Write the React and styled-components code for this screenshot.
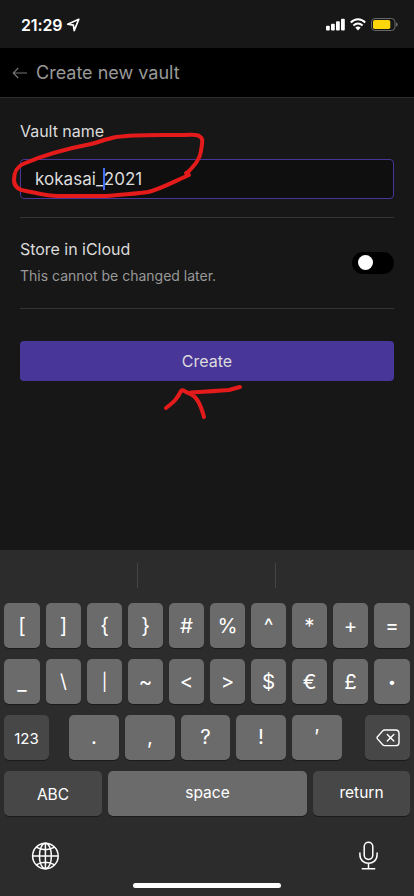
import React from "react";
import styled, { createGlobalStyle } from "styled-components";

const Global = createGlobalStyle`
  * { box-sizing: border-box; }
  body { margin: 0; background: #171717; font-family: Inter, "Liberation Sans", sans-serif; }
`;

const Phone = styled.main`
  position: relative;
  display: flex;
  flex-direction: column;
  width: 414px;
  height: 896px;
  overflow: hidden;
  background: #171717;
  color: #dcdcdc;
`;

const StatusBar = styled.header`
  display: flex;
  align-items: center;
  justify-content: space-between;
  height: 48px;
  padding: 1px 16px 0 21px;
  color: #fff;
`;

const StatusGroup = styled.div`
  display: flex;
  align-items: center;
  gap: ${(p) => p.$gap}px;
`;

const Clock = styled.span`
  font-size: 16px;
  font-weight: 600;
  line-height: 20px;
  letter-spacing: -0.15px;
`;

const TitleBar = styled.nav`
  display: flex;
  align-items: center;
  gap: 9px;
  height: 50px;
  padding: 0 12px;
  background: #000;
  border-bottom: 1px solid #2c2c2c;
  color: #999;
`;

const Title = styled.h1`
  margin: 0;
  font-size: 18px;
  font-weight: 400;
  line-height: 24px;
`;

const Form = styled.section`
  display: flex;
  flex-direction: column;
  height: 452px;
  padding: 21px 20px 0;
`;

const Label = styled.div`
  font-size: 16px;
  line-height: 24px;
  letter-spacing: -0.03px;
`;

const Field = styled.div`
  display: flex;
  align-items: center;
  height: 40px;
  margin: 16px 0 18px;
  padding: 0 14px;
  border: 1px solid #483699;
  border-radius: 4px;
  background: #0f0f0f;
  font-size: 17px;
  letter-spacing: 0.04px;
`;

const Caret = styled.i`
  width: 2px;
  height: 22px;
  margin: 0 -1px;
  background: #426cf5;
`;

const Setting = styled.div`
  display: flex;
  align-items: center;
  justify-content: space-between;
  height: 92px;
  border-top: 1px solid #333;
  border-bottom: 1px solid #333;
`;

const SettingText = styled.div`
  padding-bottom: 2px;
`;

const Hint = styled.div`
  margin-top: 4px;
  font-size: 14px;
  line-height: 22px;
  color: #999;
`;

const Switch = styled.div`
  width: 42px;
  height: 22px;
  padding: 3px 6px;
  border-radius: 11px;
  background: #000;
`;

const Knob = styled.div`
  width: 15px;
  height: 15px;
  border-radius: 50%;
  background: #fff;
`;

const CreateButton = styled.button`
  height: 40px;
  margin: 32px 0 0;
  padding: 0;
  border: 0;
  border-radius: 4px;
  background: #483699;
  color: #dcdcdc;
  font: 400 16px/40px Inter, sans-serif;
`;

const Keyboard = styled.section`
  display: flex;
  flex-direction: column;
  height: 346px;
  background: #2c2c2c;
  color: #fff;
`;

const Suggestions = styled.div`
  display: grid;
  grid-template-columns: 138px 138px 1fr;
  height: 53px;
  padding: 13px 0 15px;
`;

const Suggestion = styled.div`
  border-right: ${(p) => (p.$last ? "0" : "1px solid #454545")};
`;

const Keys = styled.div`
  display: flex;
  flex-direction: column;
  gap: 11px;
  padding: 0 4px;
`;

const KeyRow = styled.div`
  display: grid;
  grid-template-columns: ${(p) => p.$columns};
  gap: 6px;
`;

const PunctuationRow = styled.div`
  display: flex;
  justify-content: space-between;
`;

const KeyGroup = styled.div`
  display: grid;
  grid-template-columns: 50px 50px 49px 50px 50px;
  gap: 6px;
  margin-right: 3px;
`;

const Key = styled.div`
  display: flex;
  align-items: center;
  justify-content: center;
  width: ${(p) => (p.$width ? p.$width + "px" : "auto")};
  height: 45px;
  padding-top: ${(p) => p.$drop || 0}px;
  padding-bottom: ${(p) => p.$lift || 0}px;
  border-radius: 5px;
  background: ${(p) => (p.$dark ? "#474747" : "#6b6b6b")};
  box-shadow: 0 1px 0 #1b1b1b;
  font-size: ${(p) => p.$size || 20.5}px;
  font-weight: 400;
  line-height: 26px;
`;

const KeyboardFooter = styled.footer`
  display: flex;
  justify-content: space-between;
  align-items: center;
  height: 42px;
  margin-top: 19px;
  padding: 0 35px 0 31px;
`;

const HomeIndicator = styled.div`
  width: 148px;
  height: 5px;
  margin: 6px auto 0;
  border-radius: 3px;
  background: #fff;
`;

const Markup = styled.svg`
  position: absolute;
  inset: 0;
  pointer-events: none;
`;

function LocationIcon() {
  return (
    <svg width="14" height="14" viewBox="0 0 14 14" fill="none" stroke="#fff" strokeWidth="1.7" strokeLinejoin="round">
      <path d="M12.8 1.3 1.7 6.2 7.4 7.1 8.2 12.6Z" />
    </svg>
  );
}

function SignalIcon() {
  return (
    <svg width="19" height="13" viewBox="0 0 19 13" fill="#fff">
      <rect x="0" y="7.7" width="3.8" height="4.8" rx="1" />
      <rect x="5" y="5.7" width="3.8" height="6.8" rx="1" />
      <rect x="10" y="3.2" width="3.8" height="9.3" rx="1" />
      <rect x="15" y="0.7" width="3.8" height="11.8" rx="1" />
    </svg>
  );
}

function WifiIcon() {
  return (
    <svg width="16" height="13" viewBox="0 0 16 13">
      <g fill="none" stroke="#fff" strokeWidth="2">
        <path d="M.8 4.5C5 .2 11 .2 15.2 4.5" />
        <path d="M3.4 7.5Q8 3.5 12.6 7.5" />
      </g>
      <path fill="#fff" d="M5.3 9.4Q8 7.4 10.7 9.4L8 12.4Z" />
    </svg>
  );
}

function BatteryIcon() {
  return (
    <svg width="27" height="13" viewBox="0 0 27 13">
      <rect x=".5" y=".5" width="23.5" height="12" rx="3.4" fill="none" stroke="#686868" />
      <path fill="#686868" d="M25 4.3Q26.8 5 26.8 6.5T25 8.7Z" />
      <rect x="2" y="2" width="17.3" height="9" rx="1.8" fill="#ffd60a" />
    </svg>
  );
}

function BackIcon() {
  return (
    <svg width="15" height="12" viewBox="0 0 15 12" fill="none" stroke="#777" strokeWidth="1.1">
      <path d="M15 6H1.2M6.2 1 1.2 6l5 5" />
    </svg>
  );
}

function DeleteIcon() {
  return (
    <svg width="24" height="18" viewBox="0 0 24 18" fill="none" stroke="#fff" strokeWidth="1.4" strokeLinecap="round" strokeLinejoin="round">
      <path d="M8.7 1h10.9q3.4 0 3.4 3.2v9.2q0 3.2-3.4 3.2H8.7q-1.2 0-2-.9L1.5 9.9q-.9-1.1 0-2.2l5.2-5.8q.8-.9 2-.9Z" />
      <path d="m11.3 5.5 6.5 6.6m0-6.6-6.5 6.6" />
    </svg>
  );
}

function GlobeIcon() {
  return (
    <svg width="28" height="28" viewBox="0 0 28 28" fill="none" stroke="#fff" strokeWidth="1.5">
      <circle cx="14.4" cy="14" r="12.8" />
      <ellipse cx="14.4" cy="14" rx="6" ry="12.8" />
      <path d="M14.4 1.2v25.6M1.6 14h25.6M5.1 5.2q9.3 5 18.6 0M5.1 22.8q9.3-5 18.6 0" />
    </svg>
  );
}

function MicrophoneIcon() {
  return (
    <svg width="21" height="30" viewBox="0 0 21 30" fill="none" stroke="#fff" strokeWidth="1.5" strokeLinecap="round">
      <rect x="6.2" y="1.2" width="8.6" height="17.2" rx="4.3" />
      <path d="M1.9 12v1.8c0 11.2 17.2 11.2 17.2 0V12M10.5 22.3v5.5M4.3 27.8h12.4" />
    </svg>
  );
}

const brackets = ["[", "]", "{", "}", "#", "%", "^", "*", "+", "="];
const symbols = ["_", "\\", "|", "~", "<", ">", "$", "€", "£", "•"];
const punctuation = [".", ",", "?", "!", "′"];
const symbolSizes = { "|": 17, "\\": 19, "•": 14 };

const tenKeys = "36px repeat(8, 35px) 36px";

export default function App() {
  return (
    <>
      <Global />
      <Phone>
        <StatusBar>
          <StatusGroup $gap={4}><Clock>21:29</Clock><LocationIcon /></StatusGroup>
          <StatusGroup $gap={5}><SignalIcon /><WifiIcon /><BatteryIcon /></StatusGroup>
        </StatusBar>
        <TitleBar><BackIcon /><Title>Create new vault</Title></TitleBar>
        <Form>
          <Label>Vault name</Label>
          <Field><span>kokasai_</span><Caret /><span>2021</span></Field>
          <Setting>
            <SettingText><Label>Store in iCloud</Label><Hint>This cannot be changed later.</Hint></SettingText>
            <Switch><Knob /></Switch>
          </Setting>
          <CreateButton>Create</CreateButton>
        </Form>
        <Keyboard>
          <Suggestions><Suggestion /><Suggestion /><Suggestion $last /></Suggestions>
          <Keys>
            <KeyRow $columns={tenKeys}>
              {brackets.map((k) => <Key key={k}>{k}</Key>)}
            </KeyRow>
            <KeyRow $columns={tenKeys}>
              {symbols.map((k) => <Key key={k} $drop={k === "_" ? 2 : 0} $size={symbolSizes[k]}>{k}</Key>)}
            </KeyRow>
            <PunctuationRow>
              <Key $dark $width={45} $size={15} $drop={2}>123</Key>
              <KeyGroup>{punctuation.map((k) => <Key key={k} $lift={1}>{k}</Key>)}</KeyGroup>
              <Key $dark $width={45}><DeleteIcon /></Key>
            </PunctuationRow>
            <KeyRow $columns="98px 1fr 97px">
              <Key $dark $size={15.5} $drop={2}>ABC</Key>
              <Key $size={15.5} $lift={2}>space</Key>
              <Key $dark $size={15.5} $lift={2}>return</Key>
            </KeyRow>
          </Keys>
          <KeyboardFooter><GlobeIcon /><MicrophoneIcon /></KeyboardFooter>
          <HomeIndicator />
        </Keyboard>
        <Markup width="414" height="896" viewBox="0 0 414 896" fill="none" stroke="#e51b1b" strokeWidth="4" strokeLinecap="round" strokeLinejoin="round">
          <path d="M187 173C195 165 200 159 201 151C202 143 204 138 199 136C196 134 191 135 185 135C161 135 136 134 116 137C106 139 99 142 91 144C65 149 39 157 23 164C15 168 14 174 14 180C14 187 19 190 26 191C37 193 47 196 58 196H106C123 194 137 194 148 192C161 189 177 180 189 175L186 173" />
          <path d="M166 408C174 402 177 399 181 391Q182 389 186 392C196 395 200 402 204 417M191 392.5Q216 391 229 390L240 387" />
        </Markup>
      </Phone>
    </>
  );
}
